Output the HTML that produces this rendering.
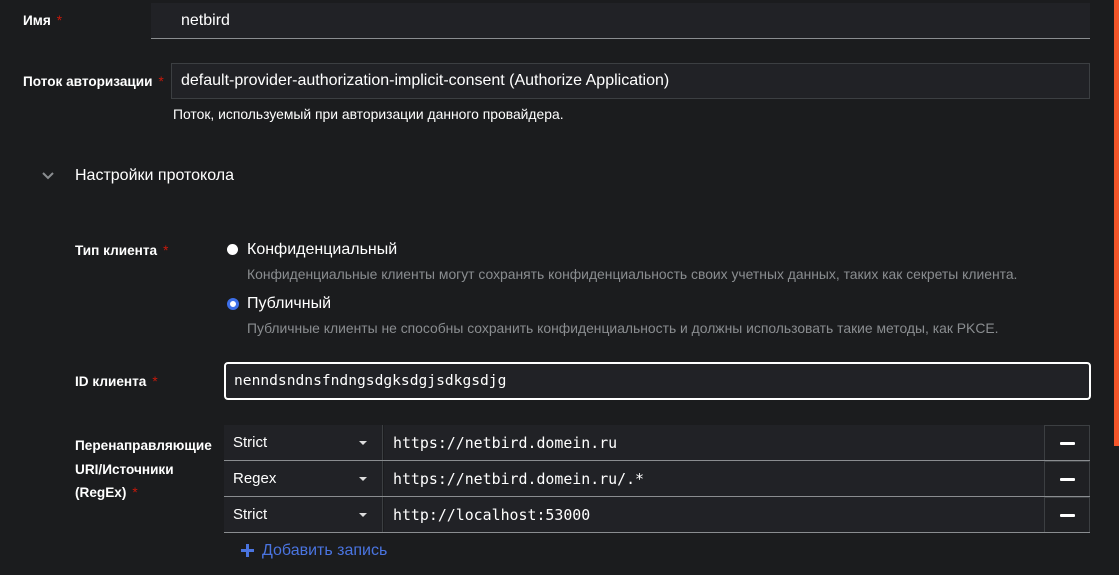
<!DOCTYPE html>
<html><head><meta charset="utf-8"><style>
*{box-sizing:border-box;margin:0;padding:0}
body{width:1119px;height:575px;overflow:hidden;background:#1b1c1e;font-family:"Liberation Sans",sans-serif;color:#fff;position:relative}
.a{position:absolute}
.lbl{font-size:13.6px;font-weight:bold;color:#fff}
.star{color:#c9190b;font-weight:normal;margin-left:6px}
.inp{background:#212226;}
.mono{font-family:"DejaVu Sans Mono","Liberation Mono",monospace;font-size:14.6px}
.row{position:absolute;left:224px;width:866px;height:36px;border-bottom:1px solid #8a8d90}
.sel{position:absolute;left:0;top:0;width:159px;height:35px;background:#212226;border-right:1px solid #3c3f42}
.sel span{position:absolute;left:9px;top:9px;font-size:15px}
.sel i{position:absolute;left:135px;top:16px;width:0;height:0;border-left:4px solid transparent;border-right:4px solid transparent;border-top:4px solid #ddd}
.url{position:absolute;left:160px;top:0;width:660px;height:35px;background:#212226}
.url span{position:absolute;left:9px;top:9px;font-size:14.9px}
.btn{position:absolute;left:820px;top:0;width:46px;height:35px;border:1px solid #3c3f42;border-bottom:none;background:#1f2023}
.btn i{position:absolute;left:15px;top:16px;width:15px;height:3px;background:#fff;border-radius:1px}
</style></head><body>
<div class="a" style="right:0;top:0;width:5px;height:446px;background:#f4562a"></div>

<div class="a lbl" style="left:23px;top:13px">Имя<span class="star">*</span></div>
<div class="a inp" style="left:151px;top:3px;width:939px;height:36px;border-bottom:1px solid #8a8d90"></div>
<div class="a" style="left:181px;top:12px;font-size:16px">netbird</div>

<div class="a lbl" style="left:23px;top:74px">Поток авторизации<span class="star">*</span></div>
<div class="a inp" style="left:171px;top:63px;width:919px;height:36px;border:1px solid #3c3f42"></div>
<div class="a" style="left:181px;top:72px;font-size:16px">default-provider-authorization-implicit-consent (Authorize Application)</div>
<div class="a" style="left:173px;top:106px;font-size:13.9px">Поток, используемый при авторизации данного провайдера.</div>

<svg class="a" style="left:42px;top:171px" width="12" height="10"><path d="M1 2 L6 7 L11 2" stroke="#8a8d90" stroke-width="2" fill="none"/></svg>
<div class="a" style="left:75px;top:167px;font-size:16px">Настройки протокола</div>

<div class="a lbl" style="left:75px;top:243px">Тип клиента<span class="star">*</span></div>
<div class="a" style="left:227px;top:244px;width:11px;height:11px;border-radius:50%;background:#fff"></div>
<div class="a" style="left:247px;top:241px;font-size:16px">Конфиденциальный</div>
<div class="a" style="left:247px;top:266px;font-size:13.9px;color:#8a8d90">Конфиденциальные клиенты могут сохранять конфиденциальность своих учетных данных, таких как секреты клиента.</div>
<div class="a" style="left:227px;top:298px;width:12px;height:12px;border-radius:50%;background:#fff;border:3px solid #3d6fe8"></div>
<div class="a" style="left:247px;top:295px;font-size:16px">Публичный</div>
<div class="a" style="left:247px;top:320px;font-size:13.9px;color:#8a8d90">Публичные клиенты не способны сохранить конфиденциальность и должны использовать такие методы, как PKCE.</div>

<div class="a lbl" style="left:75px;top:374px">ID клиента<span class="star">*</span></div>
<div class="a inp" style="left:224px;top:362px;width:867px;height:38px;border:2px solid #fff;border-radius:4px"></div>
<div class="a mono" style="left:234px;top:372px">nenndsndnsfndngsdgksdgjsdkgsdjg</div>

<div class="a lbl" style="left:75px;top:434px;line-height:23.5px">Перенаправляющие<br>URI/Источники<br>(RegEx)<span class="star">*</span></div>
<div class="row" style="top:425px"><div class="sel"><span>Strict</span><i></i></div><div class="url"><span class="mono">https://netbird.domein.ru</span></div><div class="btn"><i></i></div></div>
<div class="row" style="top:461px"><div class="sel"><span>Regex</span><i></i></div><div class="url"><span class="mono">https://netbird.domein.ru/.*</span></div><div class="btn"><i></i></div></div>
<div class="row" style="top:497px"><div class="sel"><span>Strict</span><i></i></div><div class="url"><span class="mono">http://localhost:53000</span></div><div class="btn"><i></i></div></div>

<svg class="a" style="left:240px;top:543px" width="15" height="15"><path d="M7.5 1V14M1 7.5H14" stroke="#4a74e0" stroke-width="3"/></svg>
<div class="a" style="left:262px;top:542px;font-size:16px;color:#4a74e0">Добавить запись</div>
</body></html>
